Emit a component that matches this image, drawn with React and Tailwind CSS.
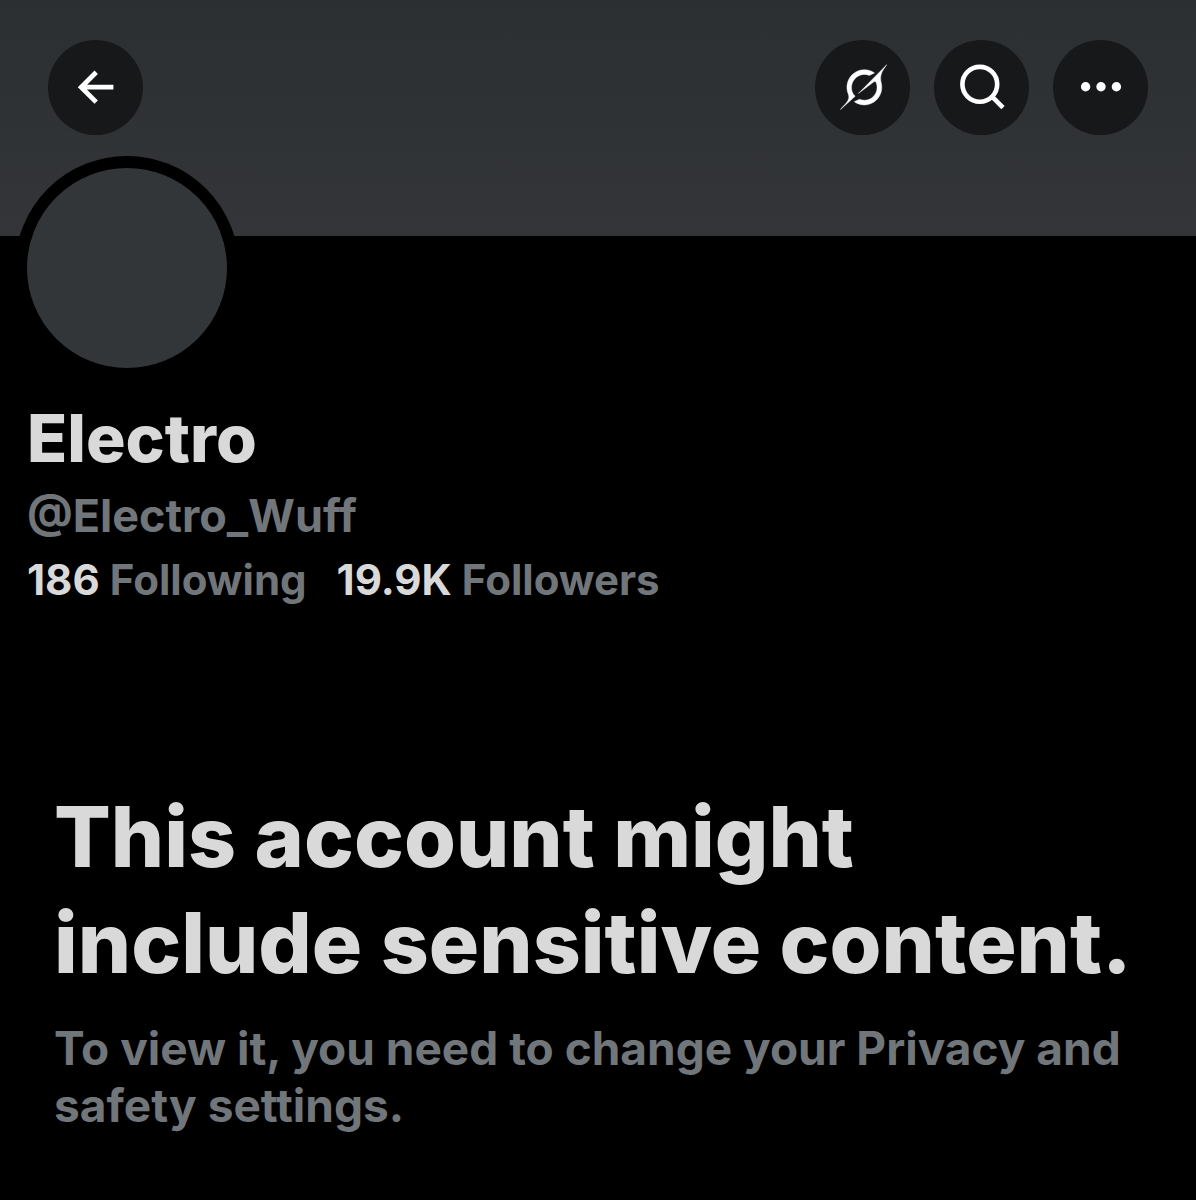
function ArrowIcon() {
    return (
        <svg viewBox="0 0 48 48" className="w-12 h-12" fill="none" stroke="currentColor" strokeWidth="4.8" aria-hidden="true">
            <path d="M41.4 23.2H9M24.2 8.3L9.2 23.2l15 14.9" />
        </svg>
    )
}

function GrokIcon() {
    return (
        <svg viewBox="0 0 34 34" className="w-12 h-12" fill="currentColor" stroke="currentColor" strokeWidth="0.3" aria-hidden="true">
            <path d="M12.745 20.54l10.97-8.19c.539-.4 1.307-.244 1.564.38 1.349 3.288.746 7.241-1.938 9.955-2.683 2.714-6.417 3.31-9.83 1.954l-3.728 1.745c5.347 3.697 11.84 2.782 15.898-1.324 3.219-3.255 4.216-7.692 3.284-11.693l.008.009c-1.351-5.878.332-8.227 3.782-13.031L33 0l-4.54 4.59v-.014L12.743 20.544m-2.263 1.987c-3.837-3.707-3.175-9.446.1-12.755 2.42-2.449 6.388-3.448 9.852-1.979l3.72-1.737c-.67-.49-1.53-1.017-2.515-1.387-4.455-1.854-9.789-.931-13.41 2.728-3.483 3.523-4.579 8.94-2.697 13.561 1.405 3.454-.899 5.898-3.22 8.364C1.49 30.2.666 31.074 0 32l10.478-9.466" transform="translate(1 0.3)" />
        </svg>
    )
}

function SearchIcon() {
    return (
        <svg viewBox="0 0 48 48" className="w-12 h-12" fill="none" stroke="currentColor" strokeWidth="4.6" aria-hidden="true">
            <circle cx="21.8" cy="20.3" r="17.4" />
            <path d="M33.6 32.2L45 43.6" />
        </svg>
    )
}

function DotsIcon() {
    return (
        <svg viewBox="0 0 48 48" className="w-12 h-12" fill="currentColor" aria-hidden="true">
            <circle cx="8.6" cy="22.8" r="4.7" />
            <circle cx="24" cy="22.8" r="4.7" />
            <circle cx="39.4" cy="22.8" r="4.7" />
        </svg>
    )
}

function RoundButton({ label, children }) {
    return (
        <button
            type="button"
            aria-label={label}
            className="flex items-center justify-center w-[95px] h-[95px] rounded-full bg-[#17181a] text-white shrink-0"
        >
            {children}
        </button>
    )
}

function Stat({ value, label }) {
    return (
        <a href="#" className="text-[#71767b]">
            <span className="text-[#d9d9d9]">{value}</span> {label}
        </a>
    )
}

function App() {
    return (
        <div className="min-h-screen bg-black font-['Inter',sans-serif] font-bold text-[#d9d9d9]">
            <header className="flex items-start justify-between h-[236px] px-12 pt-10 bg-linear-to-b from-[#2c2f32] to-[#333538]">
                <RoundButton label="Back"><ArrowIcon /></RoundButton>
                <div className="flex gap-6">
                    <RoundButton label="Grok"><GrokIcon /></RoundButton>
                    <RoundButton label="Search"><SearchIcon /></RoundButton>
                    <RoundButton label="More"><DotsIcon /></RoundButton>
                </div>
            </header>

            <main>
                <section className="px-[27px]">
                    <div className="relative w-[224px] h-[224px] -mt-20 -ml-3 rounded-full border-12 border-black bg-[#333639]" />
                    <h1 className="mt-3 text-[66px] leading-[92px] font-extrabold">Electro</h1>
                    <p className="text-[45px] leading-[64px] text-[#71767b]">@Electro_Wuff</p>
                    <div className="flex gap-[30px] text-[42px] leading-[64px]">
                        <Stat value="186" label="Following" />
                        <Stat value="19.9K" label="Followers" />
                    </div>
                </section>

                <section className="mt-[172px] px-[54px]">
                    <h2 className="text-[84px] leading-[106px] font-extrabold">This account might include sensitive content.</h2>
                    <p className="mt-6 text-[46px] leading-[57px] text-[#71767b]">
                        To view it, you need to change your Privacy and safety settings.
                    </p>
                </section>
            </main>
        </div>
    )
}

export default App
